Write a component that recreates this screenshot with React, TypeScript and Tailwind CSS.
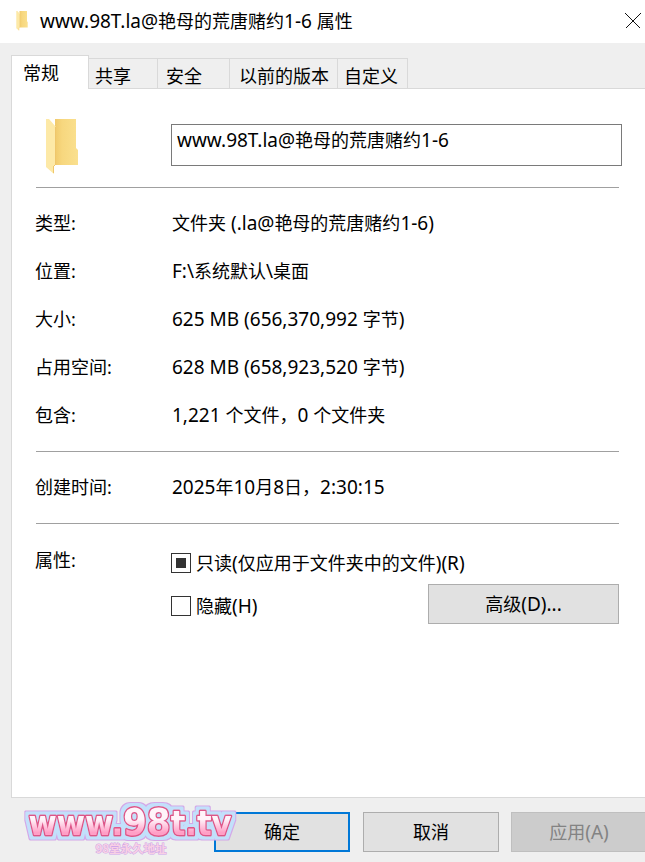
import React from "react";

const font = "font-['Noto_Sans','Noto_Sans_CJK_SC',sans-serif]";

// Latin runs sit a bit larger than the CJK glyphs around them
const Mixed = ({ text }: { text: string }) => (
  <>
    {text.split(/([\u0020-\u007e]+)/).map((part, i) =>
      i % 2 === 1 ? (
        <span key={i} className="text-[19px]">
          {part}
        </span>
      ) : (
        part
      ),
    )}
  </>
);

const FolderIcon = ({ className }: { className: string }) => (
  <svg viewBox="0 0 32 56" className={className}>
    <defs>
      <linearGradient id="back" x1="0" x2="1" y1="0" y2="0">
        <stop offset="0.2" stopColor="#eec565" />
        <stop offset="0.5" stopColor="#f7d77e" />
        <stop offset="1" stopColor="#fae08f" />
      </linearGradient>
    </defs>
    <path d="M0 0H30V29L32 31V46H9V0Z" fill="url(#back)" />
    <path d="M0 0H3L10 8V46H8V55L0 48Z" fill="#fde9a7" />
    <path d="M9 8L10 8V46H8V54H7V47H9Z" fill="#efc66b" />
  </svg>
);

const tabs = [
  { label: "共享", className: "w-[70px] pl-[6px]" },
  { label: "安全", className: "w-[73px] pl-[8px]" },
  { label: "以前的版本", className: "w-[109px] pl-[9px]" },
  { label: "自定义", className: "w-[71px] pl-[6px]" },
];

const rows = [
  { label: "类型:", value: "文件夹 (.la@艳母的荒唐赌约1-6)" },
  { label: "位置:", value: "F:\\系统默认\\桌面" },
  { label: "大小:", value: "625 MB (656,370,992 字节)" },
  { label: "占用空间:", value: "628 MB (658,923,520 字节)" },
  { label: "包含:", value: "1,221 个文件，0 个文件夹" },
];

const Row = ({ label, value }: { label: string; value: string }) => (
  <div className="flex h-12 items-center">
    <div className="-ml-px w-[137px] shrink-0">{label}</div>
    <div className="whitespace-nowrap">
      <Mixed text={value} />
    </div>
  </div>
);

const Logo = () => (
  <svg viewBox="0 0 222 80" className="absolute left-[21px] top-[782px] h-[80px] w-[222px]">
    <defs>
      <linearGradient id="pink" x1="0" x2="0" y1="0.3" y2="0.85">
        <stop offset="0.25" stopColor="#fff4fa" />
        <stop offset="0.8" stopColor="#ff9fc6" />
      </linearGradient>
      {/* lilac and blue halo around the lettering */}
      <filter id="halo" x="-10%" y="-30%" width="120%" height="160%">
        <feMorphology in="SourceAlpha" operator="dilate" radius="4" result="outer" />
        <feFlood floodColor="#d3a8e8" />
        <feComposite in2="outer" operator="in" result="lilac" />
        <feMorphology in="SourceAlpha" operator="dilate" radius="2.5" result="inner" />
        <feFlood floodColor="#c2e0fb" />
        <feComposite in2="inner" operator="in" result="blue" />
        <feMerge>
          <feMergeNode in="lilac" />
          <feMergeNode in="blue" />
          <feMergeNode in="SourceGraphic" />
        </feMerge>
      </filter>
    </defs>
    <text
      x="109"
      y="53"
      textLength="203"
      lengthAdjust="spacingAndGlyphs"
      textAnchor="middle"
      fontFamily="'DejaVu Sans', sans-serif"
      fontWeight="700"
      fill="url(#pink)"
      stroke="#dd5488"
      strokeWidth="3"
      strokeLinejoin="round"
      paintOrder="stroke"
      filter="url(#halo)"
    >
      <tspan fontSize="34">www.</tspan>
      <tspan fontSize="38">98</tspan>
      <tspan fontSize="34">t.tv</tspan>
    </text>
    <text x="110" y="71" textAnchor="middle" fontSize="11.5" fontWeight="700" fontFamily="'Noto Sans CJK SC', sans-serif" fill="#f8d0e4" stroke="#cfa6ea" strokeWidth="1" paintOrder="stroke">
      98堂永久地址
    </text>
  </svg>
);

export default function App() {
  return (
    <div className={`${font} relative flex h-[862px] w-[645px] flex-col overflow-hidden bg-[#efefef] text-[18px] leading-6 text-black`}>
      {/* title bar */}
      <div className="flex h-[43px] shrink-0 items-center bg-white pb-[2px] pl-[15px]">
        <FolderIcon className="h-[20px] w-[14px] shrink-0" />
        <span className="ml-[11px] whitespace-nowrap">
          <Mixed text="www.98T.la@艳母的荒唐赌约1-6 属性" />
        </span>
        <svg viewBox="0 0 16 16" className="ml-auto mr-[4px] h-[16px] w-[16px]" shapeRendering="crispEdges">
          <path d="M0.5 0.5L15.5 15.5M15.5 0.5L0.5 15.5" stroke="#111" strokeWidth="1" fill="none" />
        </svg>
      </div>

      {/* tabs */}
      <div className="relative z-10 ml-[11px] mt-[12px] flex h-[34px] items-start">
        <div className="h-[34px] w-[78px] shrink-0 border border-b-0 border-[#d9d9d9] bg-white pl-[11px] pt-[5px]">常规</div>
        {tabs.map((tab) => (
          <div
            key={tab.label}
            className={`${tab.className} -ml-px mt-[3px] h-[31px] shrink-0 border border-[#d9d9d9] bg-[#efefef] pt-[5px]`}
          >
            {tab.label}
          </div>
        ))}
      </div>

      {/* panel */}
      <div className="-mt-px ml-[11px] h-[710px] w-[634px] shrink-0 border border-r-0 border-[#d9d9d9] bg-white pl-[24px] pr-[26px]">
        <div className="flex h-[99px] items-start border-b border-[#a0a0a0]">
          <FolderIcon className="ml-[10px] mt-[30px] h-[56px] w-[32px] shrink-0" />
          <div className="ml-[93px] mt-[35px] h-[42px] w-[451px] shrink-0 border border-[#7a7a7a] pl-[5px] pt-[3px] whitespace-nowrap">
            <Mixed text="www.98T.la@艳母的荒唐赌约1-6" />
          </div>
        </div>

        <div className="mt-[11px] border-b border-[#a0a0a0] pb-[12px]">
          {rows.map((row) => (
            <Row key={row.label} {...row} />
          ))}
        </div>

        <div className="mt-[11px] border-b border-[#a0a0a0] pb-[12px]">
          <Row label="创建时间:" value="2025年10月8日，2:30:15" />
        </div>

        <div className="mt-[26px] flex">
          <div className="-ml-px -mt-[2px] w-[136px] shrink-0">属性:</div>
          <div className="flex-1">
            <div className="flex h-[26px] items-center">
              <span className="flex h-[20px] w-[20px] items-center justify-center border border-[#333]">
                <span className="h-[10px] w-[10px] bg-[#333]" />
              </span>
              <span className="ml-[5px] whitespace-nowrap">
                <Mixed text="只读(仅应用于文件夹中的文件)(R)" />
              </span>
            </div>
            <div className="mt-[11px] flex items-center">
              <span className="h-[20px] w-[20px] border border-[#333]" />
              <span className="ml-[5px] whitespace-nowrap">
                <Mixed text="隐藏(H)" />
              </span>
              <button className="-mt-[3px] ml-auto h-[40px] w-[191px] border border-[#adadad] bg-[#e1e1e1]">
                <Mixed text="高级(D)..." />
              </button>
            </div>
          </div>
        </div>
      </div>

      {/* footer buttons */}
      <div className="mt-[14px] flex pl-[214px]">
        <button className="h-[40px] w-[136px] shrink-0 border-2 border-[#0078d7] bg-[#e1e1e1]">确定</button>
        <button className="ml-[13px] h-[40px] w-[136px] shrink-0 border border-[#adadad] bg-[#e1e1e1]">取消</button>
        <button className="ml-[12px] h-[40px] w-[136px] shrink-0 border border-[#bfbfbf] bg-[#cccccc] text-[#838383]">
          <Mixed text="应用(A)" />
        </button>
      </div>

      <Logo />
    </div>
  );
}
